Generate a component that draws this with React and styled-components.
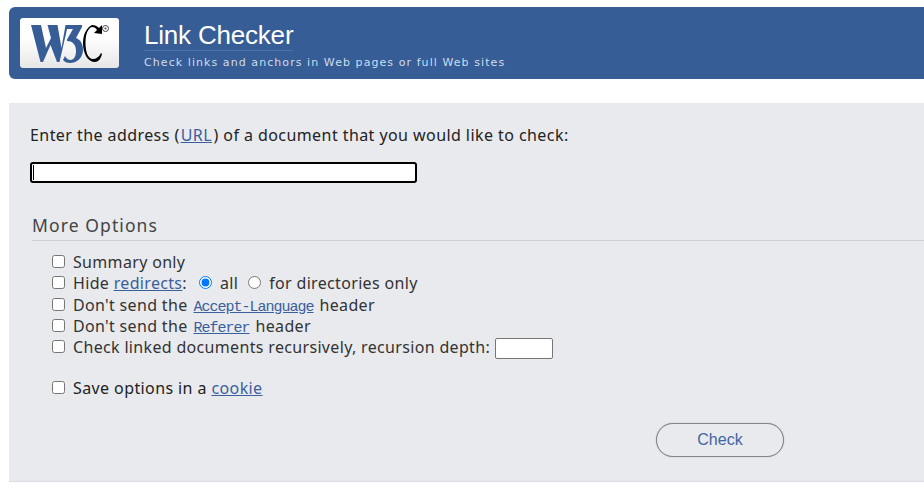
import React from "react";
import styled, { createGlobalStyle } from "styled-components";

const Global = createGlobalStyle`
  html, body { margin: 0; padding: 0; background: #fff; overflow: hidden; }
  body { font-family: "Noto Sans", "Open Sans", sans-serif; font-size: 16px; letter-spacing: 0.43px; color: #222; }
`;

const Page = styled.div`
  width: 924px;
  height: 489px;
  box-sizing: border-box;
  padding: 7px 0 0 9px;
  overflow: hidden;
  display: flex;
  flex-direction: column;
  gap: 24px;
`;

const Banner = styled.header`
  height: 72px;
  background: #365d95;
  border-radius: 6px 0 0 6px;
  display: flex;
  align-items: flex-start;
  padding: 11px 0 0 11px;
  box-sizing: border-box;
  gap: 25px;
`;

const LogoBox = styled.a`
  display: block;
  width: 99px;
  height: 50px;
  border-radius: 3px;
  background: linear-gradient(#fff 40%, #e6e6e6);
`;

const Titles = styled.div`
  display: flex;
  flex-direction: column;
  align-items: flex-start;
`;

const Title = styled.h1`
  margin: 3px 0 0;
  font: 400 26px/28px "Liberation Sans", Arial, sans-serif;
  letter-spacing: -0.2px;
  color: #fff;
  border-bottom: 1px solid #4d73a8;
  padding-bottom: 1px;
`;

const Tagline = styled.p`
  margin: 5px 0 0;
  font: 400 11px/14px "DejaVu Sans", Verdana, sans-serif;
  letter-spacing: 1.07px;
  color: #cfdcf0;
`;

const Panel = styled.main`
  height: 379px;
  background: #e9eaee;
  border-bottom: 1px solid #dcdce2;
  box-sizing: border-box;
  padding: 21px 0 0 21px;
  display: flex;
  flex-direction: column;
`;

const Prompt = styled.p`
  margin: 0;
  line-height: 22px;
  color: #222;
`;

const Link = styled.a`
  color: #3a5f9c;
  text-decoration: underline;
`;

const PromptLink = styled(Link)`
  margin: 0 1.5px 0 1px;
`;

const CodeLink = styled(Link)`
  font-family: "Liberation Mono", monospace;
  font-size: 15px;
  letter-spacing: -1px;
  margin-left: 6px;
  margin-right: 6px;
`;

const UrlField = styled.div`
  position: relative;
  width: 387px;
  height: 21px;
  margin-top: 16px;
`;

const UrlInput = styled.input`
  width: 100%;
  height: 100%;
  box-sizing: border-box;
  border: 2px solid #000;
  border-radius: 3px;
  background: #fff;
  padding: 0;
  outline: none;
  display: block;
`;

const Caret = styled.span`
  position: absolute;
  left: 3px;
  top: 3px;
  width: 1px;
  height: 15px;
  background: #000;
`;

const Options = styled.section`
  margin-top: 31px;
  margin-left: 2px;
`;

const OptionsTitle = styled.h2`
  margin: 0;
  font: 400 17.5px/22px "Noto Sans", sans-serif;
  letter-spacing: 1.1px;
  color: #444;
  padding-bottom: 4px;
  border-bottom: 1px solid #d0d1d6;
`;

const OptionList = styled.div`
  margin: 11px 0 0 20px;
  display: flex;
  flex-direction: column;
`;

const Row = styled.label`
  display: block;
  height: 21.3px;
  line-height: 21.3px;
  letter-spacing: 0.33px;
  color: #333;
  white-space: pre;
`;

const SaveRow = styled(Row)`
  margin-top: 20px;
  letter-spacing: 0.4px;
  color: #222;
`;

const Check = styled.input.attrs({ type: "checkbox" })`
  width: 13px;
  height: 13px;
  margin: 0 8px 0 0;
  vertical-align: 0;
`;

const Radio = styled.input.attrs({ type: "radio", name: "hide" })`
  width: 13px;
  height: 13px;
  margin: 0 ${(p) => p.$after}px 0 ${(p) => p.$before}px;
  vertical-align: 0;
`;

const Depth = styled.input`
  width: 58px;
  height: 21px;
  box-sizing: border-box;
  border: 1px solid #767676;
  border-radius: 2px;
  background: #fff;
  margin-left: 5px;
  padding: 0;
  vertical-align: 0;
`;

const Actions = styled.div`
  display: flex;
  margin-top: 23px;
  padding-left: 624px;
`;

const CheckButton = styled.button`
  width: 128px;
  height: 34px;
  border: 1px solid #85868b;
  border-radius: 17px;
  box-shadow: 0 0 1px #85868b;
  background: #e9eaee;
  color: #3f65a3;
  font: 400 16px "Liberation Sans", Arial, sans-serif;
`;

function Logo() {
  return (
    <svg width="99" height="50" viewBox="0 0 99 50" aria-label="W3C" style={{ display: "block" }}>
      <g fill="#365d95">
        <path d="M11 7H21L26 30L31 20L27.5 7H37.5L41.5 30L45.5 7H48L39.5 44H37L30.5 27L23 44H20.5Z" />
        <path d="M46 7H62V9L56 20C60.5 21.5 63 26 63 32C63 39 57.5 45 50 45C47 45 44.5 44 43 42L45 38C46 40 48 42 50.5 42C54 42 56 38 56 33C56 26 52 23 47 23V21.5L53 11H47Z" />
      </g>
      <path fill="#000" d="M72 7C66 10 63 17 63 25C63 36 68 44 75 44C78 44 81 41 82 36L81 35C79 39 76 41 73 41C68 41 65.5 34 65.5 25C65.5 16 68 10 72 9C74 9 76 10 77 12L74 15L82 16L82 7L79 10C77 8 75 7 72 7Z" />
      <circle cx="85.5" cy="10.5" r="3" fill="none" stroke="#444" strokeWidth="1" />
      <circle cx="85.5" cy="10.5" r="1" fill="#444" />
    </svg>
  );
}

export default function App() {
  return (
    <Page>
      <Global />
      <Banner>
        <LogoBox><Logo /></LogoBox>
        <Titles>
          <Title>Link Checker</Title>
          <Tagline>Check links and anchors in Web pages or full Web sites</Tagline>
        </Titles>
      </Banner>
      <Panel>
        <Prompt>Enter the address (<PromptLink href="#">URL</PromptLink>) of a document that you would like to check:</Prompt>
        <UrlField>
          <UrlInput type="text" />
          <Caret />
        </UrlField>
        <Options>
          <OptionsTitle>More Options</OptionsTitle>
          <OptionList>
            <Row><Check />Summary only</Row>
            <Row><Check />Hide <Link href="#">redirects</Link>:<Radio $before={12} $after={8} defaultChecked />all<Radio $before={10} $after={8} />for directories only</Row>
            <Row><Check />Don't send the<CodeLink href="#">Accept-Language</CodeLink>header</Row>
            <Row><Check />Don't send the<CodeLink href="#">Referer</CodeLink>header</Row>
            <Row><Check />Check linked documents recursively, recursion depth:<Depth type="text" /></Row>
            <SaveRow><Check />Save options in a <Link href="#">cookie</Link></SaveRow>
          </OptionList>
          <Actions><CheckButton type="button">Check</CheckButton></Actions>
        </Options>
      </Panel>
    </Page>
  );
}
